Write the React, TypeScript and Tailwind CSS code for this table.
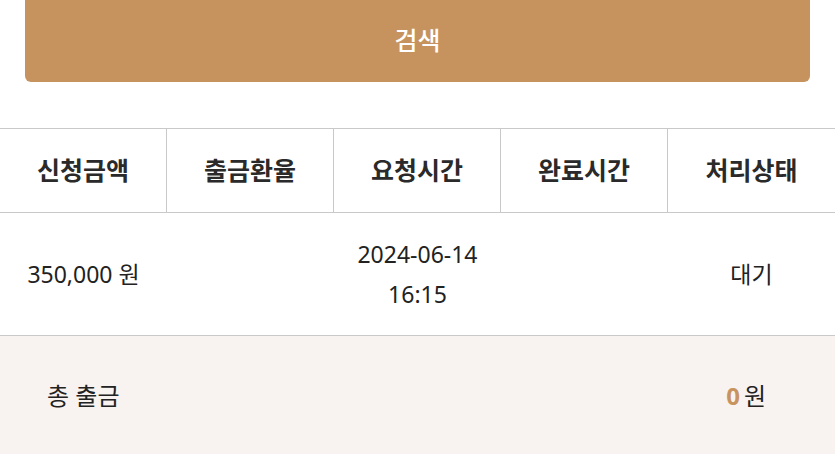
import React from "react";

const font = { fontFamily: '"Noto Sans", "Noto Sans CJK KR", sans-serif' };

export default function App() {
  const headers = ["신청금액", "출금환율", "요청시간", "완료시간", "처리상태"];
  return (
    <div className="w-[835px] h-[454px] overflow-hidden bg-white text-[#222]" style={font}>
      <div className="px-[25px]">
        <button className="w-full h-[82px] rounded-b-[6px] bg-[#c6935f] text-white text-[25px] font-medium flex items-center justify-center">
          검색
        </button>
      </div>
      <div className="mt-[46px] border-t border-[#c9c9c9]">
        <div className="grid grid-cols-5 h-[84px] border-b border-[#c9c9c9]">
          {headers.map((h, i) => (
            <div
              key={h}
              className={`flex items-center justify-center text-[25px] font-bold text-[#2a2a2a] ${i < 4 ? "border-r border-[#c9c9c9]" : ""}`}
            >
              {h}
            </div>
          ))}
        </div>
        <div className="grid grid-cols-5 h-[123px] border-b border-[#c9c9c9] text-[23px] text-[#222]">
          <div className="flex items-center justify-center">350,000&nbsp;원</div>
          <div />
          <div className="flex flex-col items-center justify-center leading-[40px]">
            <span>2024-06-14</span>
            <span>16:15</span>
          </div>
          <div />
          <div className="flex items-center justify-center">대기</div>
        </div>
        <div className="h-[120px] bg-[#f8f3f0] flex items-center justify-between pl-[47px] pr-[69px] text-[24px] text-[#222]">
          <span>총 출금</span>
          <span>
            <span className="text-[#c8935f] font-bold mr-[4px]">0</span>원
          </span>
        </div>
      </div>
    </div>
  );
}
